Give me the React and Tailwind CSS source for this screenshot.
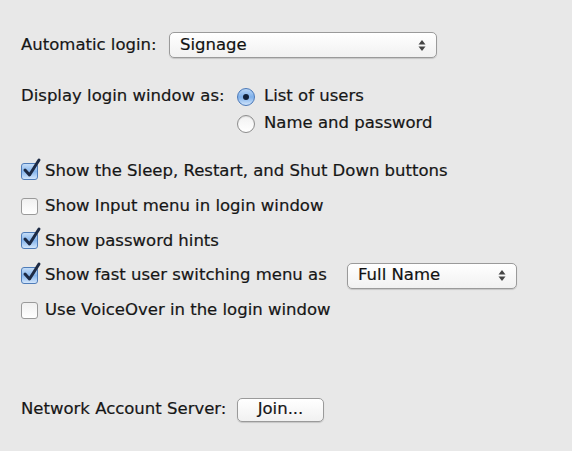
import React from 'react';

const Arrows = () => (
  <svg width="8" height="13" viewBox="0 0 8 13" className="shrink-0">
    <path d="M4 1 L7.5 5.5 L0.5 5.5 Z" fill="#444" />
    <path d="M4 12 L7.5 7.5 L0.5 7.5 Z" fill="#444" />
  </svg>
);

const Popup = ({ value, className }) => (
  <div
    className={`flex items-center justify-between h-[26px] rounded-[5px] border border-[#9a9a9a] bg-gradient-to-b from-white to-[#f1f1f1] shadow-[0_1px_1px_rgba(0,0,0,0.15)] pl-[10px] pr-[10px] ${className}`}
  >
    <span className="text-[#111]">{value}</span>
    <Arrows />
  </div>
);

const Radio = ({ checked, label }) => (
  <div className="flex items-center h-[27px] gap-[9px]">
    {checked ? (
      <span className="flex items-center justify-center w-[18px] h-[18px] rounded-full border border-[#4a78b8] bg-gradient-to-b from-[#b9d6f6] via-[#7fb0ea] to-[#cfe4fb]">
        <span className="w-[6px] h-[6px] rounded-full bg-[#10203a]" />
      </span>
    ) : (
      <span className="w-[18px] h-[18px] rounded-full border border-[#8d8d8d] bg-gradient-to-b from-[#f2f2f2] to-white shadow-[inset_0_1px_1px_rgba(0,0,0,0.1)]" />
    )}
    <span>{label}</span>
  </div>
);

const Checkbox = ({ checked }) => (
  <span className="relative shrink-0 w-[17px] h-[17px]">
    {checked ? (
      <span className="block w-[17px] h-[17px] rounded-[3px] border border-[#4f7cb8] bg-gradient-to-b from-[#c5ddf7] via-[#86b5ec] to-[#d3e6fb]" />
    ) : (
      <span className="block w-[17px] h-[17px] rounded-[3px] border border-[#9a9a9a] bg-gradient-to-b from-[#f0f0f0] to-white" />
    )}
    {checked && (
      <svg
        width="20"
        height="20"
        viewBox="0 0 20 20"
        className="absolute left-[1px] top-[-5px] overflow-visible"
      >
        <path
          d="M3 12 L7.5 17 L17 2"
          fill="none"
          stroke="#1d2a44"
          strokeWidth="3"
          strokeLinecap="round"
          strokeLinejoin="round"
        />
      </svg>
    )}
  </span>
);

const CheckRow = ({ checked, children }) => (
  <div className="flex items-center h-[34.75px]">
    <div className="w-[24px] flex">
      <Checkbox checked={checked} />
    </div>
    {children}
  </div>
);

export default function App() {
  return (
    <div
      className="w-[572px] h-[451px] bg-[#e8e8e8] pl-[21px] pt-[32px] text-[16.5px] text-[#161616] [-webkit-text-stroke:0.2px_#161616] overflow-hidden"
      style={{ fontFamily: '"DejaVu Sans", Verdana, sans-serif' }}
    >
      <div className="flex items-center h-[26px]">
        <span className="w-[148px]">Automatic login:</span>
        <Popup value="Signage" className="w-[268px]" />
      </div>

      <div className="flex mt-[25px]">
        <div className="w-[216px] h-[27px] flex items-center">Display login window as:</div>
        <div className="flex flex-col">
          <Radio checked label="List of users" />
          <Radio label="Name and password" />
        </div>
      </div>

      <div className="mt-[17px] flex flex-col">
        <CheckRow checked>
          <span>Show the Sleep, Restart, and Shut Down buttons</span>
        </CheckRow>
        <CheckRow>
          <span>Show Input menu in login window</span>
        </CheckRow>
        <CheckRow checked>
          <span>Show password hints</span>
        </CheckRow>
        <CheckRow checked>
          <span className="w-[302px]">Show fast user switching menu as</span>
          <Popup value="Full Name" className="w-[170px]" />
        </CheckRow>
        <CheckRow>
          <span>Use VoiceOver in the login window</span>
        </CheckRow>
      </div>

      <div className="flex items-center mt-[69px] h-[26px]">
        <span className="w-[216px]">Network Account Server:</span>
        <div className="flex items-center justify-center w-[87px] h-[24px] rounded-[5px] border border-[#9a9a9a] bg-gradient-to-b from-white to-[#f1f1f1] shadow-[0_1px_1px_rgba(0,0,0,0.15)]">
          Join...
        </div>
      </div>
    </div>
  );
}
